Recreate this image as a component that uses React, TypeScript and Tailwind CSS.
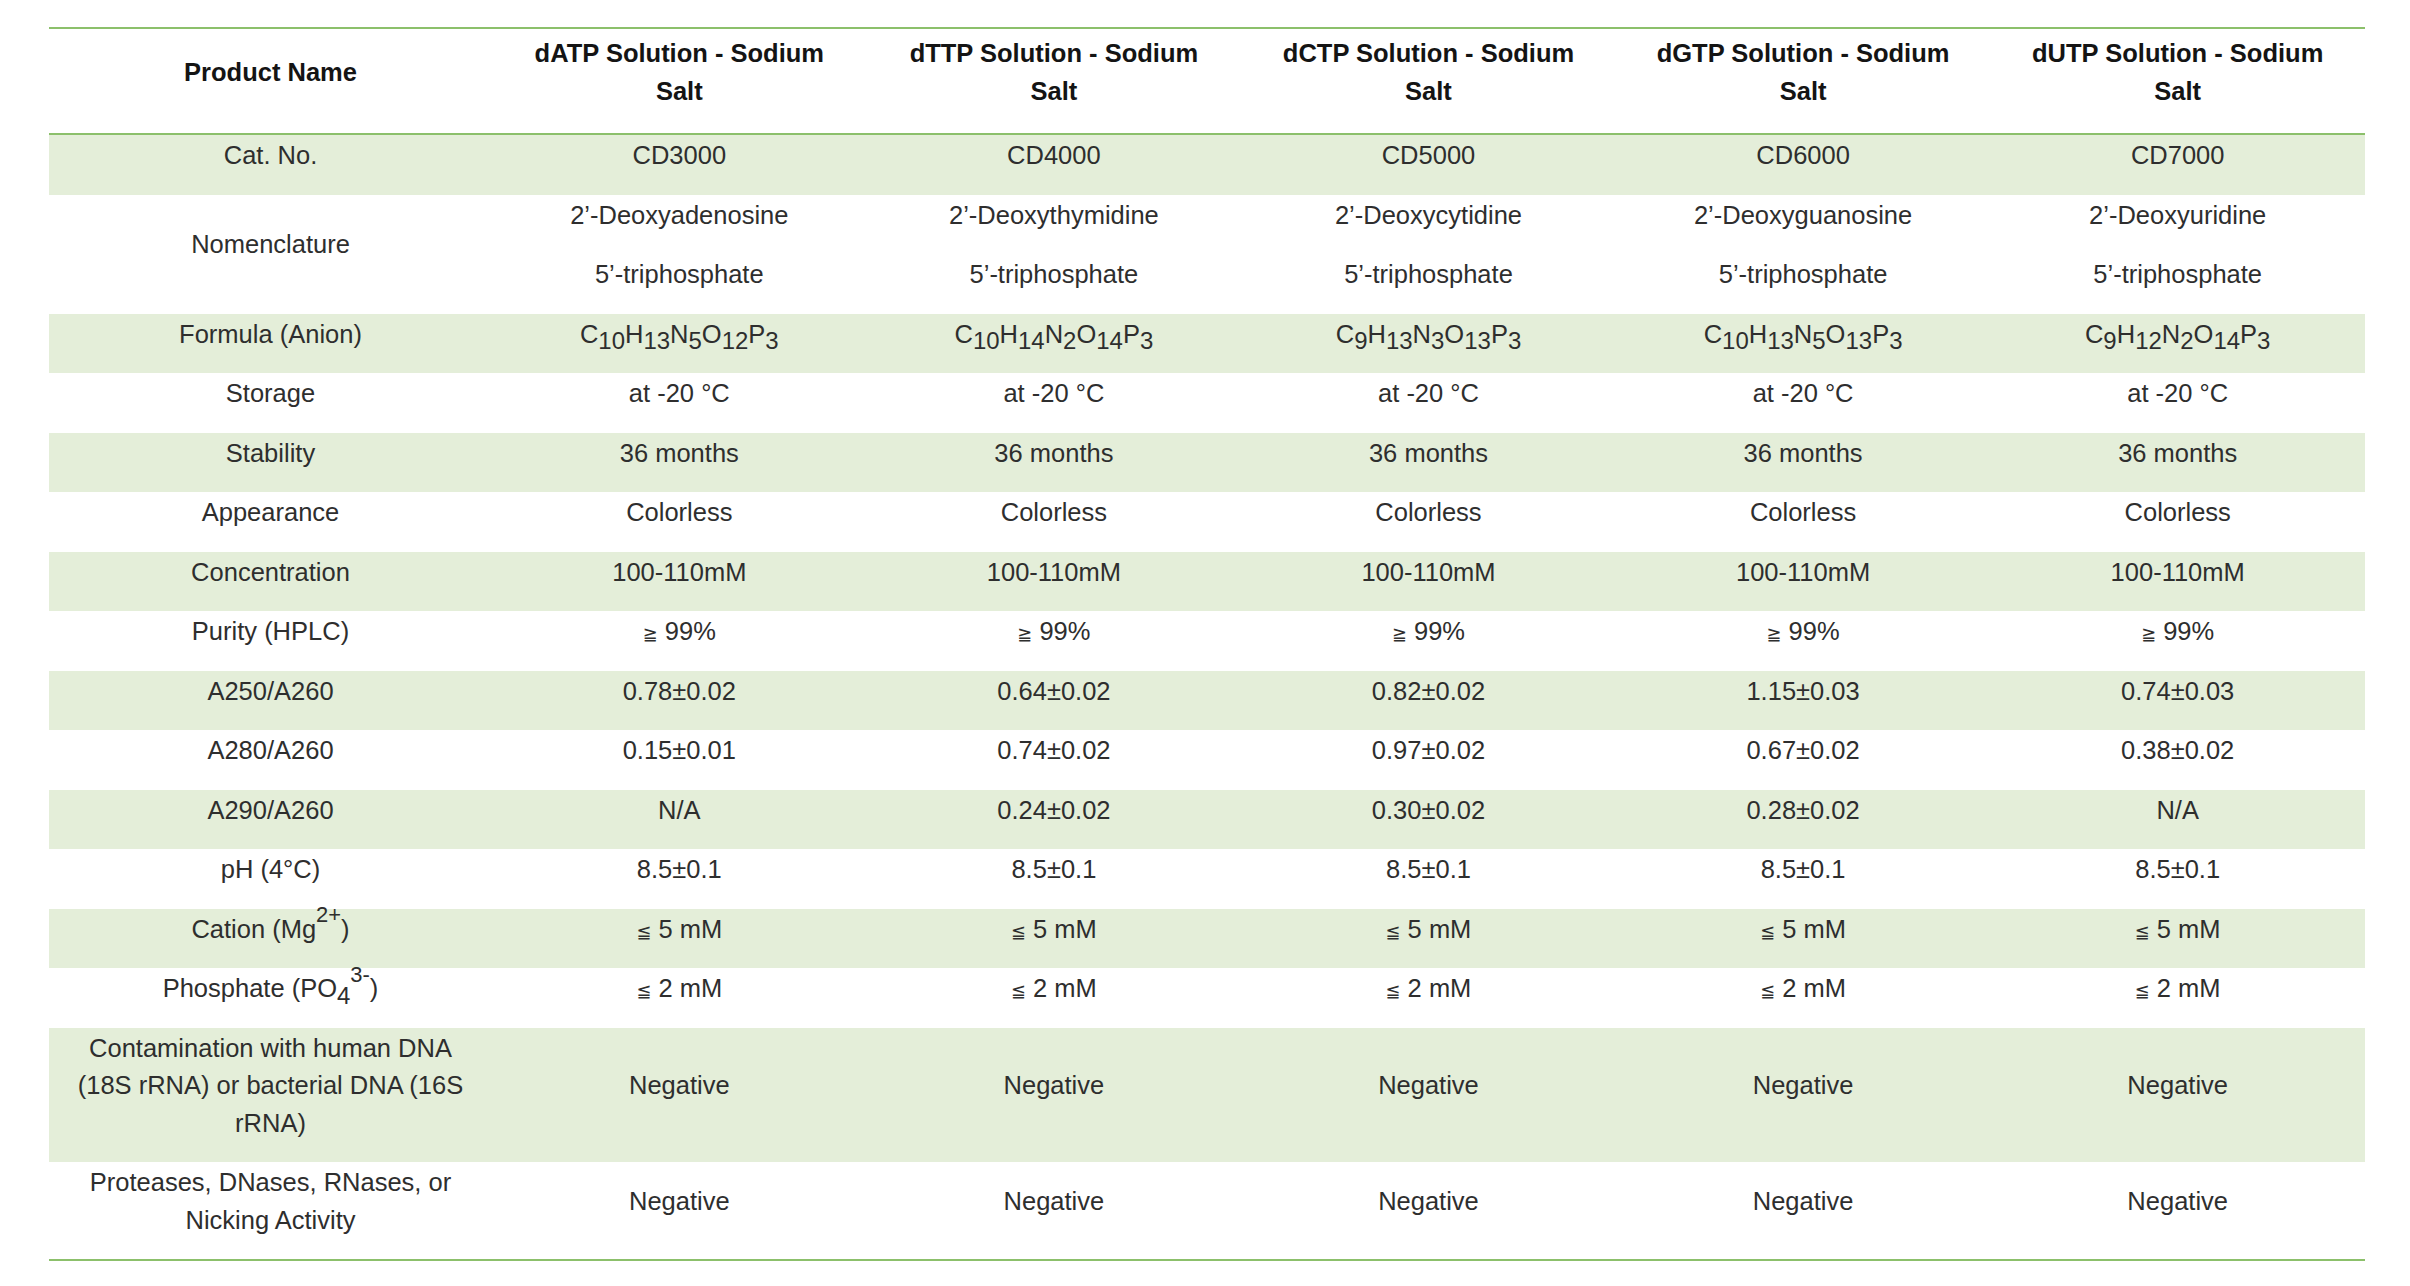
import React from 'react';

type Row = {
  label: React.ReactNode;
  values: React.ReactNode[] | React.ReactNode;
  // rows like Nomenclature hold two paragraphs per cell
  stacked?: boolean;
};

const products = ['dATP', 'dTTP', 'dCTP', 'dGTP', 'dUTP'];

// leading-[0] keeps the shifted glyphs from growing the line box
function Sub({ children }: { readonly children: React.ReactNode }) {
  return <span className="relative top-[0.28em] text-[0.94em] leading-[0]">{children}</span>;
}

function Sup({ children }: { readonly children: React.ReactNode }) {
  return <span className="relative -top-[0.7em] text-[0.86em] leading-[0]">{children}</span>;
}

// "C10H13N5O12P3" -> element symbols with lowered counts
function Formula({ value }: { readonly value: string }) {
  const parts = [...value.matchAll(/([A-Z][a-z]?)(\d*)/g)];
  return (
    <>
      {parts.map(([, el, n], i) => (
        <React.Fragment key={i}>
          {el}
          {n && <Sub>{n}</Sub>}
        </React.Fragment>
      ))}
    </>
  );
}

const Ge = () => <span className="font-['DejaVu_Sans'] text-[0.7em] leading-[0]">≧</span>;
const Le = () => <span className="font-['DejaVu_Sans'] text-[0.7em] leading-[0]">≦</span>;

const rows: Row[] = [
  { label: 'Cat. No.', values: ['CD3000', 'CD4000', 'CD5000', 'CD6000', 'CD7000'] },
  {
    label: 'Nomenclature',
    stacked: true,
    values: [
      '2’-Deoxyadenosine',
      '2’-Deoxythymidine',
      '2’-Deoxycytidine',
      '2’-Deoxyguanosine',
      '2’-Deoxyuridine',
    ],
  },
  {
    label: 'Formula (Anion)',
    values: ['C10H13N5O12P3', 'C10H14N2O14P3', 'C9H13N3O13P3', 'C10H13N5O13P3', 'C9H12N2O14P3'].map(
      (f) => <Formula key={f} value={f} />,
    ),
  },
  { label: 'Storage', values: 'at -20 °C' },
  { label: 'Stability', values: '36 months' },
  { label: 'Appearance', values: 'Colorless' },
  { label: 'Concentration', values: '100-110mM' },
  {
    label: 'Purity (HPLC)',
    values: (
      <>
        <Ge /> 99%
      </>
    ),
  },
  { label: 'A250/A260', values: ['0.78±0.02', '0.64±0.02', '0.82±0.02', '1.15±0.03', '0.74±0.03'] },
  { label: 'A280/A260', values: ['0.15±0.01', '0.74±0.02', '0.97±0.02', '0.67±0.02', '0.38±0.02'] },
  { label: 'A290/A260', values: ['N/A', '0.24±0.02', '0.30±0.02', '0.28±0.02', 'N/A'] },
  { label: 'pH (4°C)', values: '8.5±0.1' },
  {
    label: (
      <>
        Cation (Mg<Sup>2+</Sup>)
      </>
    ),
    values: (
      <>
        <Le /> 5 mM
      </>
    ),
  },
  {
    label: (
      <>
        Phosphate (PO<Sub>4</Sub>
        <Sup>3-</Sup>)
      </>
    ),
    values: (
      <>
        <Le /> 2 mM
      </>
    ),
  },
  {
    label: 'Contamination with human DNA (18S rRNA) or bacterial DNA (16S rRNA)',
    values: 'Negative',
  },
  { label: 'Proteases, DNases, RNases, or Nicking Activity', values: 'Negative' },
];

export default function App() {
  return (
    <div className="min-h-[1286px] w-[2410px] bg-white pt-[27px] pl-[49px] font-['Liberation_Sans',Arial,sans-serif] text-[25.5px] leading-[37.5px] text-[#2e2e2e]">
      <div className="w-[2316px] border-y-2 border-[#8cc06b]">
        <table className="w-full table-fixed border-collapse text-center">
          <colgroup>
            <col className="w-[443px]" />
            {products.map((p) => (
              <col key={p} />
            ))}
          </colgroup>
          <thead>
            <tr className="border-b-2 border-[#8cc06b]">
              <th className="px-6 pt-[6px] pb-[23px] align-middle font-bold text-[#141414]">
                Product Name
              </th>
              {products.map((p) => (
                <th key={p} className="px-6 pt-[6px] pb-[23px] align-top font-bold text-[#141414]">
                  {p} Solution - Sodium Salt
                </th>
              ))}
            </tr>
          </thead>
          <tbody>
            {rows.map((row, i) => {
              const cells = Array.isArray(row.values)
                ? row.values
                : products.map(() => row.values);
              return (
                <tr key={i} className={i % 2 === 0 ? 'bg-[#e4eed9]' : 'bg-white'}>
                  <td className="px-6 pt-[2px] pb-[20px] align-middle">{row.label}</td>
                  {cells.map((v, j) => (
                    <td key={j} className="px-6 pt-[2px] pb-[20px] align-middle">
                      {row.stacked ? (
                        <div className="flex flex-col gap-[22px]">
                          <span>{v}</span>
                          <span>5’-triphosphate</span>
                        </div>
                      ) : (
                        v
                      )}
                    </td>
                  ))}
                </tr>
              );
            })}
          </tbody>
        </table>
      </div>
    </div>
  );
}
